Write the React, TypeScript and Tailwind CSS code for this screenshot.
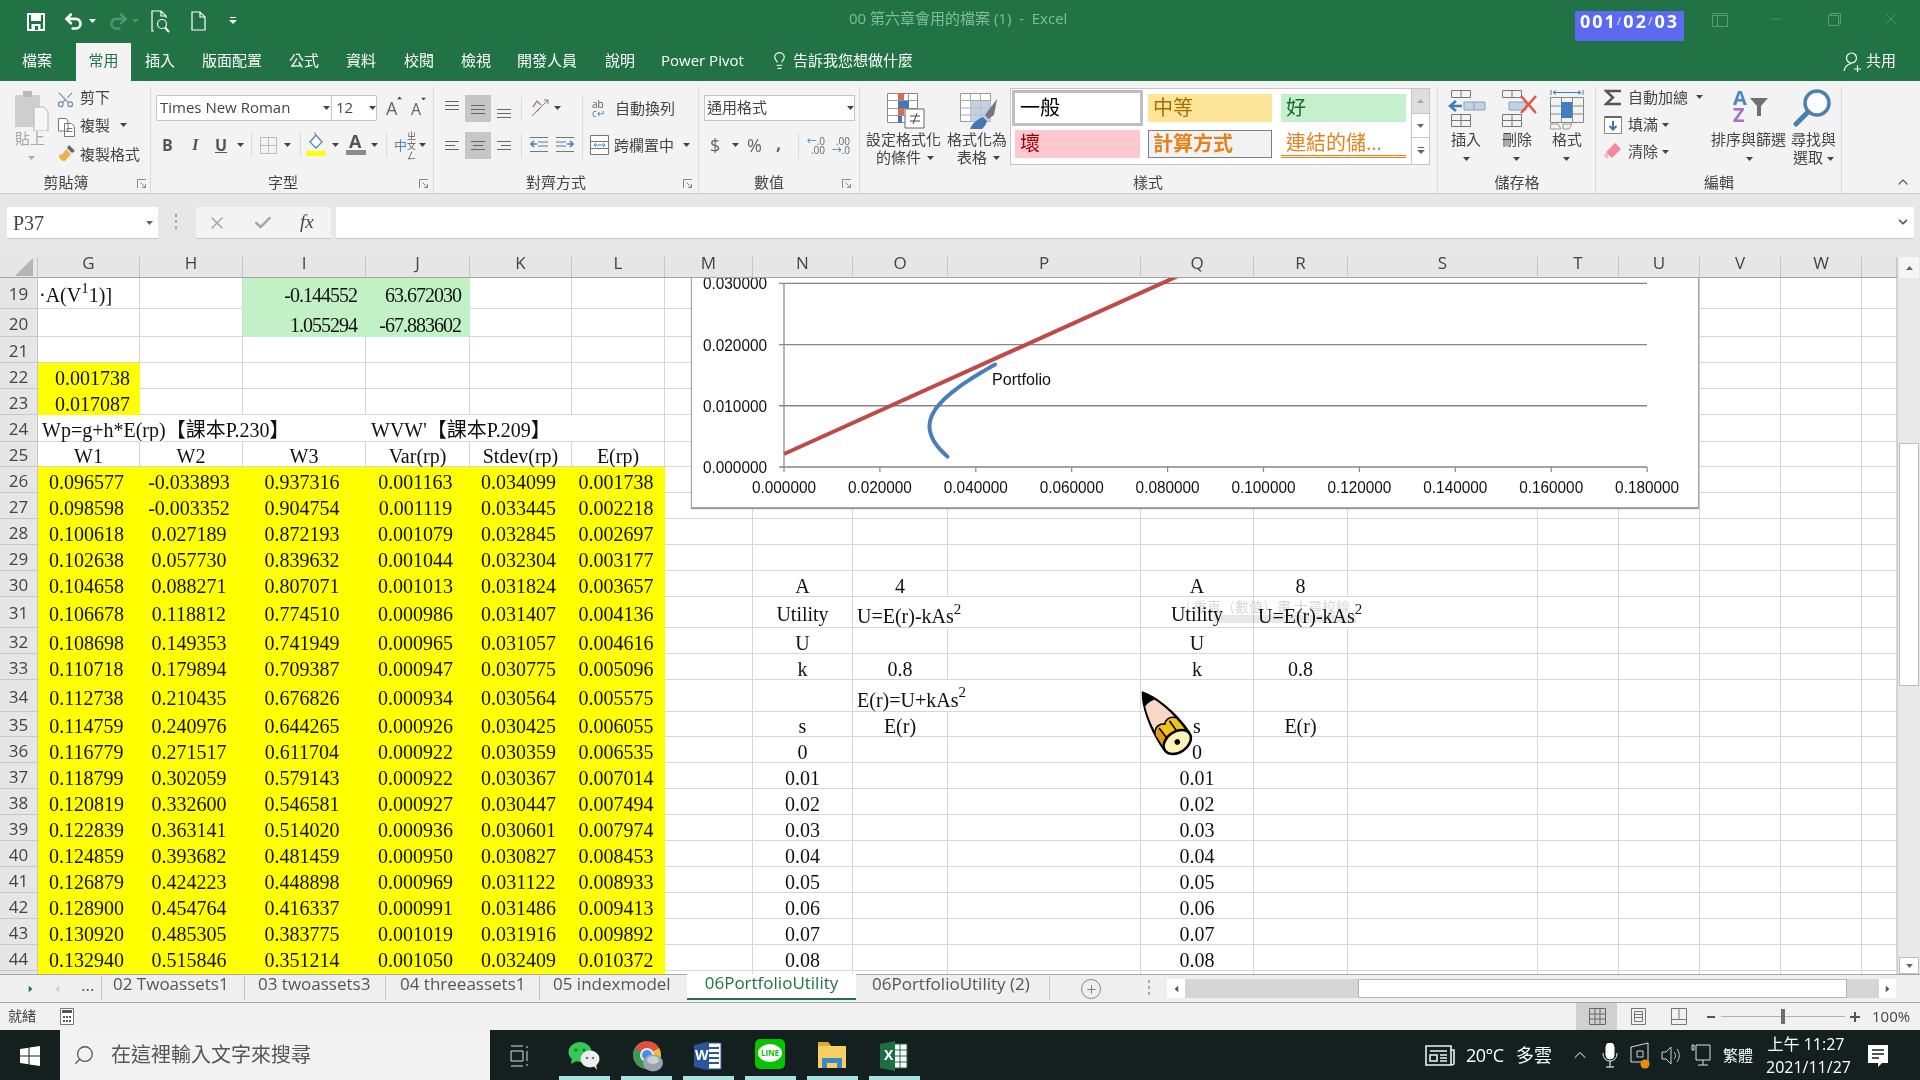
import React from "react";
import { Scissors, Undo2, Redo2, X, Check, Search, Lightbulb, Minus, ChevronUp, ChevronDown, Plus } from "lucide-react";

const Caret = ({ className = "" }: { className?: string }) => (
  <svg className={className} width="7" height="4" viewBox="0 0 7 4">
    <path d="M0 0h7L3.5 4z" fill="currentColor" />
  </svg>
);
const Launcher = ({ className = "" }: { className?: string }) => (
  <svg className={className} width="10" height="10" viewBox="0 0 10 10" fill="none" stroke="#8a8a8a">
    <path d="M.5 9V.5H9M3.5 3.5L8.5 8.5M5 8.5h3.5V5" />
  </svg>
);
const Lines = ({ className = "", y = 6, w = [14, 14, 14], align = "c" }: { className?: string; y?: number; w?: number[]; align?: string }) => (
  <svg className={className} width="18" height="18" viewBox="0 0 18 18" stroke="#666" strokeWidth="1">
    {w.map((v, i) => {
      const x = align === "l" ? 2 : align === "r" ? 16 - v : 9 - v / 2;
      return <path key={i} d={`M${x} ${y + i * 4 + 0.5}h${v}`} />;
    })}
  </svg>
);

const data: string[][] = [
  ["0.096577", "-0.033893", "0.937316", "0.001163", "0.034099", "0.001738"],
  ["0.098598", "-0.003352", "0.904754", "0.001119", "0.033445", "0.002218"],
  ["0.100618", "0.027189", "0.872193", "0.001079", "0.032845", "0.002697"],
  ["0.102638", "0.057730", "0.839632", "0.001044", "0.032304", "0.003177"],
  ["0.104658", "0.088271", "0.807071", "0.001013", "0.031824", "0.003657"],
  ["0.106678", "0.118812", "0.774510", "0.000986", "0.031407", "0.004136"],
  ["0.108698", "0.149353", "0.741949", "0.000965", "0.031057", "0.004616"],
  ["0.110718", "0.179894", "0.709387", "0.000947", "0.030775", "0.005096"],
  ["0.112738", "0.210435", "0.676826", "0.000934", "0.030564", "0.005575"],
  ["0.114759", "0.240976", "0.644265", "0.000926", "0.030425", "0.006055"],
  ["0.116779", "0.271517", "0.611704", "0.000922", "0.030359", "0.006535"],
  ["0.118799", "0.302059", "0.579143", "0.000922", "0.030367", "0.007014"],
  ["0.120819", "0.332600", "0.546581", "0.000927", "0.030447", "0.007494"],
  ["0.122839", "0.363141", "0.514020", "0.000936", "0.030601", "0.007974"],
  ["0.124859", "0.393682", "0.481459", "0.000950", "0.030827", "0.008453"],
  ["0.126879", "0.424223", "0.448898", "0.000969", "0.031122", "0.008933"],
  ["0.128900", "0.454764", "0.416337", "0.000991", "0.031486", "0.009413"],
  ["0.130920", "0.485305", "0.383775", "0.001019", "0.031916", "0.009892"],
  ["0.132940", "0.515846", "0.351214", "0.001050", "0.032409", "0.010372"],
];
const colNames = ["G", "H", "I", "J", "K", "L", "M", "N", "O", "P", "Q", "R", "S", "T", "U", "V", "W", ""];
const rowNums = Array.from({ length: 27 }, (_, i) => 19 + i);

const content: Record<string, React.ReactNode> = {
  G19: <>·A(V<sup>1</sup>1)]</>,
  I19: "-0.144552",
  J19: "63.672030",
  I20: "1.055294",
  J20: "-67.883602",
  G22: "0.001738",
  G23: "0.017087",
  G24: "Wp=g+h*E(rp)【課本P.230】",
  J24: "WVW'【課本P.209】",
  G25: "W1",
  H25: "W2",
  I25: "W3",
  J25: "Var(rp)",
  K25: "Stdev(rp)",
  L25: "E(rp)",
  N30: "A", O30: "4", Q30: "A", R30: "8",
  N31: "Utility", O31: <>U=E(r)-kAs<sup>2</sup></>, Q31: "Utility", R31: <>U=E(r)-kAs<sup>2</sup></>,
  N32: "U", Q32: "U",
  N33: "k", O33: "0.8", Q33: "k", R33: "0.8",
  O34: <>E(r)=U+kAs<sup>2</sup></>,
  N35: "s", O35: "E(r)", Q35: "s", R35: "E(r)",
};
["0", "0.01", "0.02", "0.03", "0.04", "0.05", "0.06", "0.07", "0.08"].forEach((v, i) => {
  content["N" + (36 + i)] = v;
  content["Q" + (36 + i)] = v;
});
data.forEach((r, i) => r.forEach((v, j) => (content["GHIJKL"[j] + (26 + i)] = v)));

function cellClass(col: string, row: number) {
  const key = col + row;
  let c = "flex items-center whitespace-nowrap min-w-0 border-r border-b ";
  const yellow = (row >= 26 && "GHIJKL".includes(col) && col !== "") || ((row === 22 || row === 23) && col === "G");
  const green = (row === 19 || row === 20) && (col === "I" || col === "J");
  if (yellow) c += "bg-[#ffff00] border-[#ffff00] ";
  else if (green) c += "bg-[#c1f1c5] border-[#c1f1c5] ";
  else c += "border-[#d6d6d6] ";
  if (["G24", "H24", "I24", "J24", "K24", "O31", "R31", "O34"].includes(key)) c += "border-r-transparent ";
  if (["G24"].includes(key)) c += "justify-start pl-[4px] pt-[4px] ";
  else if (key === "J24") c += "justify-start pl-[5px] pt-[4px] ";
  else if (key === "G19") c += "justify-start pl-[1px] pt-[4px] ";
  else if (key === "O31" || key === "O34" || key === "R31") c += "justify-start pl-[4px] pt-[8px] ";
  else if (green) c += "justify-end pr-[8px] tracking-[-1px] pt-[4px] ";
  else if (key === "G22" || key === "G23") c += "justify-end pr-[9px] pt-[4px] ";
  else if (yellow) c += "justify-center pr-[4px] pt-[4px] ";
  else c += "justify-center pt-[4px] ";
  return c;
}

const chartBlue = (() => {
  const pts: string[] = [];
  for (let i = 0; i <= 40; i++) {
    const e = 0.001738 + ((0.017087 - 0.001738) * i) / 40;
    const s = Math.sqrt(0.000921 + 9.56 * (e - 0.00677) * (e - 0.00677));
    pts.push(`${(784 + s * 4794).toFixed(1)},${(467 - e * 6000).toFixed(1)}`);
  }
  return pts.join(" ");
})();

const Chart = () => {
  const xs = [0, 1, 2, 3, 4, 5, 6, 7, 8, 9];
  const ys = [0, 1, 2, 3];
  return (
    <div className="absolute left-[691px] top-[-30px] w-[1008px] h-[260px] bg-white border border-[#a6a6a6] shadow-[0_1px_1px_#999]">
      <svg className="absolute left-[-1px] top-[-1px] [font-family:Liberation_Sans,sans-serif]" width="1008" height="260" viewBox="691 248 1008 260">
        {ys.map((i) => (
          <g key={i}>
            <path d={`M779 ${467 - i * 61.2}H1647`} stroke="#868686" strokeWidth="1.4" />
            <text x="767" y={467 - i * 61.2 + 6} textAnchor="end" fontSize="16" textLength="64" lengthAdjust="spacingAndGlyphs" fill="#111">
              {(i / 100).toFixed(6)}
            </text>
          </g>
        ))}
        <path d="M784 284V467" stroke="#868686" strokeWidth="1.2" />
        {xs.map((i) => (
          <g key={i}>
            <path d={`M${784 + i * 95.9} 467v5`} stroke="#868686" strokeWidth="1.2" />
            <text x={784 + i * 95.9} y="493" textAnchor="middle" fontSize="16" textLength="64" lengthAdjust="spacingAndGlyphs" fill="#111">
              {((i * 2) / 100).toFixed(6)}
            </text>
          </g>
        ))}
        <polyline points={chartBlue} fill="none" stroke="#4a7ebb" strokeWidth="4" strokeLinecap="round" />
        <path d="M784 454L1178 276" stroke="#be4b48" strokeWidth="4" />
        <text x="992" y="385" fontSize="16" textLength="59" lengthAdjust="spacingAndGlyphs" fill="#111">Portfolio</text>
      </svg>
    </div>
  );
};

const Pencil = () => (
  <svg className="absolute left-[1129px] top-[401px] z-20" width="76" height="100" viewBox="0 0 76 100">
    <g transform="translate(14 14) rotate(-35) scale(1.15)">
      <path d="M0 0C6 8 13 28 13 50A13 9 0 0 1 -13 50C-13 28 -6 8 0 0Z" fill="#f5c21b" stroke="#000" strokeWidth="2.2" />
      <path d="M-4.5 9C-8 18 -10 26 -10.5 34C-6 29 -2 31 0 33C2 31 6 29 10.5 34C10 26 8 18 4.5 9Z" fill="#f8d6c8" />
      <path d="M0 0C2.5 3 4 6 5 10C2 9 -2 9 -5 10C-4 6 -2.5 3 0 0Z" fill="#000" stroke="#000" />
      <path d="M-12 36C-12 40 -12 46 -13 50C-10 54 -8 55 -6 56L-6 32Z" fill="#e59a17" />
      <path d="M-6 33L-5 56M5 33L5 56M-11 34C-7 29 -2 31 0 33C2 31 7 29 11 34" fill="none" stroke="#000" strokeWidth="1.4" />
      <ellipse cx="0" cy="52" rx="13" ry="9" fill="#fbf3b8" stroke="#000" strokeWidth="2.2" />
      <circle cx="0" cy="52" r="2.4" fill="#000" />
    </g>
  </svg>
);

const Sheet = () => (
  <div className="relative w-[1920px] h-[717px] bg-white shrink-0 [font-family:Liberation_Serif,Noto_Sans_CJK_TC,serif] text-[20px] leading-[24px] text-[#111]">
    <div className="grid grid-cols-[38px_102px_103px_123px_104px_102px_93px_88px_100px_95px_193px_113px_94px_190px_81px_81px_81px_81px_35px] h-[21px] bg-[#e6e6e6] border-b border-[#a6a6a6] [font-family:Open_Sans,sans-serif] text-[17px] leading-[12px] text-[#444]">
      <div className="relative border-r border-[#c6c6c6]">
        <svg className="absolute left-[15px] top-[1px]" width="18" height="18" viewBox="0 0 18 18">
          <path d="M18 0V18H0Z" fill="#b4b4b4" />
        </svg>
      </div>
      {colNames.map((n, i) => (
        <div key={i} className="flex items-start justify-center border-r border-[#c6c6c6]">{n}</div>
      ))}
    </div>
    <div className="relative h-[696px] overflow-hidden">
      <div className="grid grid-cols-[38px_102px_103px_123px_104px_102px_93px_88px_100px_95px_193px_113px_94px_190px_81px_81px_81px_81px_35px] grid-rows-[31px_28px_26px_26px_26px_27px_25px_26px_26px_26px_26px_26px_31px_26px_26px_32px_25px_26px_26px_26px_26px_26px_26px_26px_26px_26px_26px]">
        {rowNums.map((r) => (
          <React.Fragment key={r}>
            <div className="flex items-center justify-center bg-[#e6e6e6] border-r border-b border-[#c6c6c6] pt-[2px] [font-family:Open_Sans,sans-serif] text-[17px] text-[#444]">{r}</div>
            {colNames.map((n, i) => (
              <div key={i} className={cellClass(n || "X", r)}>{content[n + r]}</div>
            ))}
          </React.Fragment>
        ))}
      </div>
      <Chart />
      <div className="absolute left-[1184px] top-[319px] w-[172px] h-[26px] overflow-hidden mix-blend-multiply [font-family:Noto_Sans_CJK_TC,sans-serif] text-[14px] leading-[18px] text-[#d8d8d8] whitespace-nowrap">
        <div className="pl-[2px]">| 重直（數值）畫 士尋校線</div>
        <div className="absolute left-[29px] top-[18px] w-[143px] h-[8px] bg-[#e8e8e8]" />
      </div>
      <Pencil />
    </div>
    {/* vertical scrollbar */}
    <div className="absolute right-0 top-0 w-[23px] h-[717px] bg-[#e9e9e9] border-l border-[#d0d0d0]">
      <div className="absolute left-[1px] top-[0px] w-[20px] h-[21px] bg-[#f5f5f5] flex items-center justify-center text-[#666]">
        <Caret className="rotate-180" />
      </div>
      <div className="absolute left-[1px] top-[186px] w-[20px] h-[243px] bg-white border border-[#bdbdbd]" />
      <div className="absolute left-[1px] top-[700px] w-[20px] h-[17px] bg-white border border-[#bdbdbd] flex items-center justify-center text-[#666]">
        <Caret />
      </div>
    </div>
  </div>
);

const TitleBar = () => (
  <div className="relative h-[81px] bg-[#217346] shrink-0 text-white">
    <svg className="absolute left-[27px] top-[13px]" width="18" height="18" viewBox="0 0 18 18">
      <path d="M1 1H17V17H1Z" fill="none" stroke="#fff" strokeWidth="2" />
      <path d="M4 2H14V8H4ZM4.5 11H13.5V17H4.5Z" fill="#fff" />
      <path d="M8 13H11V17H8Z" fill="#217346" />
    </svg>
    <Undo2 className="absolute left-[63px] top-[11px]" size={21} strokeWidth={3} />
    <Caret className="absolute left-[89px] top-[19px] text-white" />
    <Redo2 className="absolute left-[108px] top-[11px] text-[#4e9470]" size={21} strokeWidth={3} />
    <Caret className="absolute left-[132px] top-[19px] text-[#4e9470]" />
    <svg className="absolute left-[151px] top-[10px]" width="20" height="23" viewBox="0 0 20 23" fill="none" stroke="#fff" strokeWidth="1.2">
      <path d="M3 21H1V1H10L15 6V8M10 1V6H15" />
      <circle cx="11" cy="14" r="4.5" />
      <path d="M14 17.5L18 22" strokeWidth="2" />
    </svg>
    <svg className="absolute left-[191px] top-[11px]" width="15" height="20" viewBox="0 0 15 20" fill="none" stroke="#fff" strokeWidth="1.2">
      <path d="M1 1H9L14 6V19H1ZM9 1V6H14" />
    </svg>
    <svg className="absolute left-[229px] top-[17px]" width="8" height="8" viewBox="0 0 8 8" fill="#fff">
      <path d="M1 0H7V1H1ZM0 3H8L4 7Z" />
    </svg>
    <div className="absolute left-[849px] top-[8px] text-[15px] leading-[20px] text-[#83bc9c] whitespace-pre">00 第六章會用的檔案 (1)  -  Excel</div>
    <div className="absolute left-[1575px] top-[11px] w-[109px] h-[30px] bg-[#5b6af0] flex items-center justify-center pb-[10px] font-bold text-[18px] tracking-[2px] text-white">
      001<span className="text-[11px] opacity-60">/</span>02<span className="text-[11px] opacity-60">/</span>03
    </div>
    <svg className="absolute left-[1712px] top-[13px]" width="16" height="14" viewBox="0 0 16 14" fill="none" stroke="#5c9a7a">
      <path d="M.5 2.5H15.5V13.5H.5ZM.5 .5H15.5M5.5 2.5V13.5" />
    </svg>
    <Minus className="absolute left-[1768px] top-[11px] text-[#5c9a7a]" size={16} strokeWidth={1} />
    <svg className="absolute left-[1828px] top-[13px]" width="13" height="13" viewBox="0 0 13 13" fill="none" stroke="#5c9a7a">
      <path d="M.5 2.5H10.5V12.5H.5ZM2.5 2.5V.5H12.5V10.5H10.5" />
    </svg>
    <X className="absolute left-[1882px] top-[10px] text-[#5c9a7a]" size={18} strokeWidth={1} />
    {/* tabs */}
    <div className="absolute left-0 top-[43px] w-full h-[38px] text-[15px] leading-[35px] whitespace-nowrap">
      <span className="absolute left-[22px]">檔案</span>
      <div className="absolute left-[76px] top-0 w-[55px] h-[38px] bg-[#f3f3f3] text-[#217346] text-center">常用</div>
      <span className="absolute left-[145px]">插入</span>
      <span className="absolute left-[202px]">版面配置</span>
      <span className="absolute left-[289px]">公式</span>
      <span className="absolute left-[346px]">資料</span>
      <span className="absolute left-[404px]">校閱</span>
      <span className="absolute left-[461px]">檢視</span>
      <span className="absolute left-[517px]">開發人員</span>
      <span className="absolute left-[605px]">說明</span>
      <span className="absolute left-[661px]">Power Pivot</span>
      <Lightbulb className="absolute left-[770px] top-[8px]" size={19} strokeWidth={1.4} />
      <span className="absolute left-[793px]">告訴我您想做什麼</span>
      <svg className="absolute left-[1843px] top-[9px]" width="19" height="20" viewBox="0 0 19 20" fill="none" stroke="#fff" strokeWidth="1.2">
        <circle cx="8.5" cy="6" r="5" />
        <path d="M1 19C2 14 5 12 8.5 11.5M11 17H18M14.5 13.5V20" />
      </svg>
      <span className="absolute left-[1866px]">共用</span>
    </div>
  </div>
);

const GroupLabel = ({ w, text }: { w: string; text: string }) => (
  <div className={`absolute left-0 top-[85px] text-center text-[15px] leading-[20px] ${w}`}>{text}</div>
);

const Ribbon = () => (
  <div className="relative flex h-[113px] bg-[#f3f3f3] border-b border-[#c9c9c9] shrink-0 text-[15px] leading-[20px] text-[#444] whitespace-nowrap">
    {/* Clipboard */}
    <div className="relative w-[151px] h-[106px] mt-[6px] border-r border-[#dadada] shrink-0">
      <svg className="absolute left-[14px] top-[2px]" width="36" height="42" viewBox="0 0 36 42">
        <path d="M1 6H26V38H1Z" fill="#cfcfcf" />
        <path d="M9 2H18V8H9Z" fill="#b8b8b8" />
        <path d="M20 18H30L34 22V42H20Z" fill="#f6f6f6" stroke="#b5b5b5" />
      </svg>
      <span className="absolute left-[15px] top-[41px] text-[#a8a8a8]">貼上</span>
      <Caret className="absolute left-[28px] top-[69px] text-[#aaa]" />
      <Scissors className="absolute left-[56px] top-[3px] text-[#7189a8] -rotate-90" size={19} strokeWidth={1.4} />
      <span className="absolute left-[80px] top-[0px]">剪下</span>
      <svg className="absolute left-[58px] top-[31px]" width="17" height="19" viewBox="0 0 17 19" fill="#fff" stroke="#777">
        <path d="M.5 .5H8L10 3V13H.5ZM6.5 5.5H13.5L16.5 8.5V18.5H6.5ZM8.5 10.5H14.5M8.5 13.5H14.5" />
      </svg>
      <span className="absolute left-[80px] top-[28px]">複製</span>
      <Caret className="absolute left-[120px] top-[36px]" />
      <svg className="absolute left-[58px] top-[57px]" width="18" height="18" viewBox="0 0 18 18">
        <path d="M11 1L17 7L14 9L9 4Z" fill="#666" />
        <path d="M8 5L13 10L7 17C4 17 1 15 1 11C5 11 6 8 8 5Z" fill="#e6b54a" />
      </svg>
      <span className="absolute left-[80px] top-[57px]">複製格式</span>
      <GroupLabel w="w-[132px]" text="剪貼簿" />
      <Launcher className="absolute left-[137px] top-[92px]" />
    </div>
    {/* Font */}
    <div className="relative w-[283px] h-[106px] mt-[6px] border-r border-[#dadada] shrink-0">
      <div className="absolute left-[5px] top-[8px] w-[221px] h-[26px] bg-white border border-[#c6c6c6] rounded-[2px]">
        <span className="absolute left-[3px] top-[1px]">Times New Roman</span>
        <Caret className="absolute left-[166px] top-[10px]" />
        <div className="absolute left-[174px] top-0 h-[24px] border-l border-[#c6c6c6]" />
        <span className="absolute left-[179px] top-[1px]">12</span>
        <Caret className="absolute left-[212px] top-[10px]" />
      </div>
      <span className="absolute left-[235px] top-[9px] text-[18px] leading-[24px] text-[#666]">A</span>
      <Caret className="absolute left-[245px] top-[9px] rotate-180 scale-75" />
      <span className="absolute left-[260px] top-[11px] text-[16px] leading-[22px] text-[#666]">A</span>
      <Caret className="absolute left-[269px] top-[10px] scale-75" />
      <span className="absolute left-[11px] top-[47px] font-bold text-[16px] leading-[22px] text-[#555]">B</span>
      <span className="absolute left-[41px] top-[47px] [font-family:Liberation_Serif,serif] font-bold italic text-[17px] leading-[22px] text-[#555]">I</span>
      <span className="absolute left-[64px] top-[47px] font-bold text-[16px] leading-[22px] underline text-[#555]">U</span>
      <Caret className="absolute left-[86px] top-[56px]" />
      <div className="absolute left-[100px] top-[46px] h-[24px] border-l border-[#d9d9d9]" />
      <svg className="absolute left-[109px] top-[50px]" width="17" height="17" viewBox="0 0 17 17" fill="none" stroke="#888" strokeDasharray="1 1">
        <path d="M.5 .5H16.5V16.5H.5ZM8.5 .5V16.5M.5 8.5H16.5" />
      </svg>
      <Caret className="absolute left-[133px] top-[56px]" />
      <div className="absolute left-[149px] top-[46px] h-[24px] border-l border-[#d9d9d9]" />
      <svg className="absolute left-[155px] top-[44px]" width="20" height="25" viewBox="0 0 20 25">
        <path d="M4 11L10 4L16 11L10 17Z" fill="#fff" stroke="#5b87b5" strokeWidth="1.3" />
        <path d="M9 4V1" stroke="#888" />
        <path d="M0 20H20V25H0Z" fill="#ffff00" />
      </svg>
      <Caret className="absolute left-[181px] top-[56px]" />
      <span className="absolute left-[198px] top-[43px] font-bold text-[18px] leading-[22px] text-[#555]">A</span>
      <div className="absolute left-[195px] top-[63px] w-[20px] h-[5px] bg-[#8c8c8c]" />
      <Caret className="absolute left-[220px] top-[56px]" />
      <div className="absolute left-[235px] top-[46px] h-[24px] border-l border-[#d9d9d9]" />
      <span className="absolute left-[243px] top-[48px] text-[13px] text-[#4c86bf]">中</span>
      <span className="absolute left-[256px] top-[44px] text-[9px] leading-[10px] w-[7px] whitespace-normal text-[#555]">ㄓ文ㄥ</span>
      <Caret className="absolute left-[268px] top-[56px]" />
      <GroupLabel w="w-[264px]" text="字型" />
      <Launcher className="absolute left-[268px] top-[92px]" />
    </div>
    {/* Alignment */}
    <div className="relative w-[265px] h-[106px] mt-[6px] border-r border-[#dadada] shrink-0">
      <div className="absolute left-[31px] top-[8px] w-[26px] h-[27px] bg-[#c6c6c6]" />
      <div className="absolute left-[31px] top-[45px] w-[26px] h-[27px] bg-[#c6c6c6]" />
      <Lines className="absolute left-[9px] top-[11px]" y={3} />
      <Lines className="absolute left-[35px] top-[13px]" y={5} />
      <Lines className="absolute left-[61px] top-[15px]" y={7} />
      <div className="absolute left-[87px] top-[10px] h-[24px] border-l border-[#d9d9d9]" />
      <svg className="absolute left-[96px] top-[11px]" width="20" height="20" viewBox="0 0 20 20" fill="none" stroke="#777">
        <path d="M2 18L18 2M14 2H18V6" stroke="#777" />
        <path d="M3 9L7 3L11 7M6 14L10 10" stroke="#a080a0" strokeWidth="1.4" />
      </svg>
      <Caret className="absolute left-[120px] top-[19px]" />
      <Lines className="absolute left-[9px] top-[49px]" y={5} w={[14, 10, 14]} align="l" />
      <Lines className="absolute left-[35px] top-[49px]" y={5} w={[14, 10, 14]} />
      <Lines className="absolute left-[61px] top-[49px]" y={5} w={[14, 10, 14]} align="r" />
      <div className="absolute left-[87px] top-[47px] h-[24px] border-l border-[#d9d9d9]" />
      <svg className="absolute left-[96px] top-[49px]" width="18" height="18" viewBox="0 0 18 18" fill="none">
        <path d="M0 1.5H18M8 6H18M8 10H18M0 15.5H18" stroke="#777" />
        <path d="M7 8H1M4 5L1 8L4 11" stroke="#3f86c8" strokeWidth="1.6" />
      </svg>
      <svg className="absolute left-[122px] top-[49px]" width="18" height="18" viewBox="0 0 18 18" fill="none">
        <path d="M0 1.5H18M0 6H10M0 10H10M0 15.5H18" stroke="#777" />
        <path d="M11 8H17M14 5L17 8L14 11" stroke="#3f86c8" strokeWidth="1.6" />
      </svg>
      <div className="absolute left-[148px] top-[8px] h-[64px] border-l border-[#dadada]" />
      <div className="absolute left-[158px] top-[13px] text-[10px] leading-[9px] text-[#555]">ab<br /><span className="text-[#3f7fbf]">c↵</span></div>
      <span className="absolute left-[181px] top-[11px]">自動換列</span>
      <svg className="absolute left-[156px] top-[48px]" width="19" height="20" viewBox="0 0 19 20" fill="#fff" stroke="#777">
        <path d="M.5 .5H18.5V19.5H.5ZM.5 6.5H18.5M.5 13.5H18.5" />
        <path d="M4 10H15M6 8L4 10L6 12M13 8L15 10L13 12" stroke="#3f86c8" fill="none" />
      </svg>
      <span className="absolute left-[180px] top-[48px]">跨欄置中</span>
      <Caret className="absolute left-[249px] top-[56px]" />
      <GroupLabel w="w-[244px]" text="對齊方式" />
      <Launcher className="absolute left-[249px] top-[92px]" />
    </div>
    {/* Number */}
    <div className="relative w-[161px] h-[106px] mt-[6px] border-r border-[#dadada] shrink-0">
      <div className="absolute left-[5px] top-[8px] w-[151px] h-[26px] bg-white border border-[#c6c6c6]">
        <span className="absolute left-[2px] top-[1px]">通用格式</span>
        <Caret className="absolute left-[142px] top-[10px]" />
      </div>
      <span className="absolute left-[11px] top-[46px] text-[18px] leading-[24px] text-[#666]">$</span>
      <Caret className="absolute left-[33px] top-[56px]" />
      <span className="absolute left-[48px] top-[46px] text-[18px] leading-[24px] text-[#666]">%</span>
      <span className="absolute left-[77px] top-[44px] font-bold text-[18px] leading-[24px] text-[#666]">,</span>
      <div className="absolute left-[99px] top-[46px] h-[26px] border-l border-[#d9d9d9]" />
      <div className="absolute left-[106px] top-[50px] w-[20px] text-[10px] leading-[9px] text-right text-[#666]"><span className="text-[#3f86c8]">←</span>.0<br />.00</div>
      <div className="absolute left-[131px] top-[50px] w-[20px] text-[10px] leading-[9px] text-right text-[#666]">.00<br /><span className="text-[#3f86c8]">→</span>.0</div>
      <GroupLabel w="w-[140px]" text="數值" />
      <Launcher className="absolute left-[143px] top-[92px]" />
    </div>
    {/* Styles */}
    <div className="relative w-[578px] h-[106px] mt-[6px] border-r border-[#dadada] shrink-0">
      <svg className="absolute left-[27px] top-[6px]" width="38" height="36" viewBox="0 0 38 36">
        <path d="M.5 .5H30.5V29.5H.5Z" fill="#fff" stroke="#888" />
        <path d="M.5 7.5H30.5M.5 15.5H30.5M.5 22.5H30.5M11.5 .5V29.5M21.5 .5V29.5" stroke="#999" />
        <path d="M11 0H17V7H11ZM11 15H17V22H11Z" fill="#d9684f" />
        <path d="M11 8H22V15H11ZM11 23H15V30H11Z" fill="#4279b5" />
        <path d="M18 16H37V35H18Z" fill="#fff" stroke="#666" />
        <path d="M23 23H33M23 28H33M30 20L26 31" stroke="#444" />
      </svg>
      <span className="absolute left-[6px] top-[42px]">設定格式化</span>
      <span className="absolute left-[16px] top-[60px]">的條件</span>
      <Caret className="absolute left-[67px] top-[69px]" />
      <svg className="absolute left-[100px] top-[6px]" width="38" height="36" viewBox="0 0 38 36">
        <path d="M.5 .5H30.5V28.5H.5Z" fill="#fff" stroke="#999" />
        <path d="M.5 7.5H30.5M.5 15H30.5M.5 22H30.5M10.5 .5V28.5M20.5 .5V28.5" stroke="#aaa" />
        <path d="M10 8H31V29H10Z" fill="#b3c6dc" opacity=".8" />
        <path d="M25 22L37 6L34 22L28 26Z" fill="#777" />
        <path d="M10 36C12 30 18 26 23 24L27 28C26 32 24 34 22 36Z" fill="#4279b5" />
      </svg>
      <span className="absolute left-[87px] top-[42px]">格式化為</span>
      <span className="absolute left-[97px] top-[60px]">表格</span>
      <Caret className="absolute left-[133px] top-[69px]" />
      <div className="absolute left-[150px] top-[1px] w-[420px] h-[77px] bg-white border border-[#c6c6c6]" />
      <div className="absolute left-[152px] top-[3px] w-[131px] h-[36px] border-[3px] border-[#bfbfbf]" />
      <div className="absolute left-[155px] top-[6px] w-[125px] h-[29px] bg-white pl-[5px] text-[20px] leading-[29px] text-black">一般</div>
      <div className="absolute left-[288px] top-[7px] w-[124px] h-[28px] bg-[#fde69a] pl-[5px] text-[20px] leading-[28px] text-[#a96a00]">中等</div>
      <div className="absolute left-[421px] top-[7px] w-[125px] h-[28px] bg-[#c6efce] pl-[5px] text-[20px] leading-[28px] text-[#1d6a2a]">好</div>
      <div className="absolute left-[155px] top-[43px] w-[125px] h-[28px] bg-[#ffc7ce] pl-[5px] text-[20px] leading-[28px] text-[#9c0006]">壞</div>
      <div className="absolute left-[288px] top-[43px] w-[124px] h-[28px] bg-[#f2f2f2] border border-[#7f7f7f] pl-[4px] text-[20px] leading-[26px] font-bold text-[#e8801a]">計算方式</div>
      <div className="absolute left-[421px] top-[43px] w-[125px] h-[28px] pl-[5px] text-[20px] leading-[26px] text-[#e8801a] border-b-[3px] border-double border-[#e8801a]">連結的儲...</div>
      <div className="absolute left-[551px] top-[1px] w-[19px] h-[26px] bg-[#dedede] border border-[#c6c6c6] flex items-center justify-center text-[#aaa]"><Caret className="rotate-180" /></div>
      <div className="absolute left-[551px] top-[26px] w-[19px] h-[25px] bg-white border border-[#c6c6c6] flex items-center justify-center text-[#666]"><Caret /></div>
      <div className="absolute left-[551px] top-[50px] w-[19px] h-[28px] bg-white border border-[#c6c6c6] flex items-center justify-center text-[#666]">
        <svg width="8" height="8" viewBox="0 0 8 8" fill="currentColor"><path d="M1 0H7V1H1ZM0 3H8L4 7Z" /></svg>
      </div>
      <GroupLabel w="w-[576px]" text="樣式" />
    </div>
    {/* Cells */}
    <div className="relative w-[158px] h-[106px] mt-[6px] border-r border-[#dadada] shrink-0">
      <svg className="absolute left-[10px] top-[3px]" width="38" height="38" viewBox="0 0 38 38" fill="none">
        <path d="M3.5 .5H22.5V7.5H3.5ZM13 .5V7.5M3.5 24.5H22.5V36.5H3.5ZM13 24.5V36.5M3.5 30.5H22.5" stroke="#777" />
        <path d="M16 12H37V20H16Z" fill="#c3d2e3" stroke="#8aa3c0" />
        <path d="M26 12V20" stroke="#8aa3c0" />
        <path d="M14 16H3M8 11L2 16L8 21" stroke="#3f7fbf" strokeWidth="2.6" />
      </svg>
      <span className="absolute left-[13px] top-[42px]">插入</span>
      <Caret className="absolute left-[25px] top-[70px]" />
      <svg className="absolute left-[64px] top-[3px]" width="36" height="38" viewBox="0 0 36 38" fill="none">
        <path d="M.5 .5H19.5V7.5H.5ZM10 .5V7.5M.5 24.5H19.5V36.5H.5ZM10 24.5V36.5M.5 30.5H19.5" stroke="#777" />
        <path d="M7 12H24V20H7Z" fill="#c3d2e3" stroke="#8aa3c0" />
        <path d="M19 6L34 23M34 6L19 23" stroke="#e2563e" strokeWidth="2.4" />
      </svg>
      <span className="absolute left-[64px] top-[42px]">刪除</span>
      <Caret className="absolute left-[75px] top-[70px]" />
      <svg className="absolute left-[111px] top-[1px]" width="36" height="42" viewBox="0 0 36 42" fill="none">
        <path d="M2 2V7M34 2V7M4 4.5H32M4 4.5L7 2.5M4 4.5L7 6.5M32 4.5L29 2.5M32 4.5L29 6.5" stroke="#3f7fbf" />
        <path d="M1.5 9.5H34.5V34.5H1.5ZM1.5 18H34.5M1.5 26H34.5M12.5 9.5V34.5M23.5 9.5V34.5" stroke="#888" />
        <path d="M12 14H23V30H12Z" fill="#3f7fbf" />
        <path d="M1.5 36H9L12 41H1.5ZM14 36H23L20 41H14Z" stroke="#999" />
      </svg>
      <span className="absolute left-[114px] top-[42px]">格式</span>
      <Caret className="absolute left-[125px] top-[70px]" />
      <GroupLabel w="w-[158px]" text="儲存格" />
    </div>
    {/* Editing */}
    <div className="relative w-[246px] h-[106px] mt-[6px] border-r border-[#dadada] shrink-0">
      <svg className="absolute left-[8px] top-[2px]" width="18" height="17" viewBox="0 0 18 17" fill="none" stroke="#555" strokeWidth="2.4">
        <path d="M17 2H2L9 8.5L2 15H17" />
      </svg>
      <span className="absolute left-[32px] top-[0px]">自動加總</span>
      <Caret className="absolute left-[100px] top-[8px]" />
      <svg className="absolute left-[8px] top-[29px]" width="18" height="18" viewBox="0 0 18 18" fill="none">
        <path d="M.5 .5H17.5V17.5H.5Z" fill="#fff" stroke="#888" />
        <path d="M1 1H17" stroke="#666" strokeWidth="2" />
        <path d="M9 5V13M5.5 10L9 13.5L12.5 10" stroke="#3d74ad" strokeWidth="2" />
      </svg>
      <span className="absolute left-[32px] top-[27px]">填滿</span>
      <Caret className="absolute left-[66px] top-[36px]" />
      <svg className="absolute left-[8px] top-[55px]" width="18" height="18" viewBox="0 0 18 18">
        <path d="M11 1L17 7L8 16L2 10Z" fill="#ef8aa0" />
        <path d="M2 10L5 13L3 17L0 14Z" fill="#f2b8c4" />
      </svg>
      <span className="absolute left-[32px] top-[54px]">清除</span>
      <Caret className="absolute left-[66px] top-[63px]" />
      <span className="absolute left-[137px] top-[1px] font-bold text-[20px] leading-[20px] text-[#4a86c5]">A</span>
      <span className="absolute left-[137px] top-[18px] font-bold text-[20px] leading-[20px] text-[#a573c6]">Z</span>
      <svg className="absolute left-[153px] top-[10px]" width="20" height="20" viewBox="0 0 20 20">
        <path d="M1 1H19L12 9V19H8V9Z" fill="#707070" />
      </svg>
      <span className="absolute left-[115px] top-[42px]">排序與篩選</span>
      <Caret className="absolute left-[150px] top-[70px]" />
      <svg className="absolute left-[197px] top-[2px]" width="40" height="38" viewBox="0 0 40 38" fill="none">
        <circle cx="24" cy="14" r="12" fill="#fff" stroke="#4c80b0" strokeWidth="3.5" />
        <path d="M15 23L3 35" stroke="#4c80b0" strokeWidth="5" strokeLinecap="round" />
      </svg>
      <span className="absolute left-[195px] top-[42px]">尋找與</span>
      <span className="absolute left-[197px] top-[60px]">選取</span>
      <Caret className="absolute left-[231px] top-[70px]" />
      <GroupLabel w="w-[246px]" text="編輯" />
    </div>
    <ChevronUp className="absolute left-[1895px] top-[93px] text-[#666]" size={16} strokeWidth={2} />
  </div>
);

const FormulaBar = () => (
  <div className="relative h-[63px] bg-[#e7e7e7] shrink-0 text-[#444]">
    <div className="absolute left-[7px] top-[13px] w-[151px] h-[32px] bg-white border-b border-[#c6c6c6]">
      <span className="absolute left-[6px] top-[4px] [font-family:Liberation_Serif,serif] text-[20px] leading-[24px]">P37</span>
      <Caret className="absolute left-[139px] top-[14px] text-[#666]" />
    </div>
    <div className="absolute left-[175px] top-[20px] flex flex-col gap-[3px]">
      <div className="w-[2px] h-[3px] bg-[#aaa]" />
      <div className="w-[2px] h-[3px] bg-[#aaa]" />
      <div className="w-[2px] h-[3px] bg-[#aaa]" />
    </div>
    <div className="absolute left-[196px] top-[13px] w-[135px] h-[32px] bg-[#f3f3f3] border-b border-[#c6c6c6]">
      <X className="absolute left-[11px] top-[6px] text-[#a8a8a8]" size={20} strokeWidth={2} />
      <Check className="absolute left-[57px] top-[6px] text-[#a8a8a8]" size={20} strokeWidth={3} />
      <span className="absolute left-[104px] top-[3px] [font-family:Liberation_Serif,serif] italic text-[19px] leading-[24px]">fx</span>
    </div>
    <div className="absolute left-[336px] top-[13px] w-[1578px] h-[32px] bg-white border-b border-[#c6c6c6]">
      <ChevronDown className="absolute left-[1560px] top-[8px] text-[#555]" size={14} strokeWidth={3} />
    </div>
  </div>
);

const SheetTabs = () => (
  <div className="relative h-[29px] bg-[#efefef] border-t border-[#a6a6a6] border-b shrink-0 text-[17px] leading-[20px] text-[#555] whitespace-nowrap">
    <Caret className="absolute left-[27px] top-[12px] -rotate-90 text-[#217346]" />
    <Caret className="absolute left-[54px] top-[12px] rotate-90 text-[#ccc]" />
    <span className="absolute left-[81px] top-[0px]">...</span>
    <div className="absolute left-[101px] top-[1px] h-[24px] border-l border-[#c6c6c6]" />
    <span className="absolute left-[113px] top-[-1px]">02 Twoassets1</span>
    <div className="absolute left-[244px] top-[1px] h-[24px] border-l border-[#c6c6c6]" />
    <span className="absolute left-[258px] top-[-1px]">03 twoassets3</span>
    <div className="absolute left-[385px] top-[1px] h-[24px] border-l border-[#c6c6c6]" />
    <span className="absolute left-[400px] top-[-1px]">04 threeassets1</span>
    <div className="absolute left-[539px] top-[1px] h-[24px] border-l border-[#c6c6c6]" />
    <span className="absolute left-[553px] top-[-1px]">05 indexmodel</span>
    <div className="absolute left-[687px] top-[-1px] w-[169px] h-[26px] bg-white border-b-[2px] border-[#217346] text-center text-[#217346] leading-[18px]">06PortfolioUtility</div>
    <span className="absolute left-[872px] top-[-1px]">06PortfolioUtility (2)</span>
    <div className="absolute left-[1049px] top-[1px] h-[24px] border-l border-[#c6c6c6]" />
    <div className="absolute left-[1081px] top-[4px] w-[20px] h-[20px] rounded-full border border-[#888] flex items-center justify-center">
      <Plus size={13} strokeWidth={1.5} className="text-[#666]" />
    </div>
    <div className="absolute left-[1148px] top-[5px] flex flex-col gap-[3px]">
      <div className="w-[2px] h-[3px] bg-[#aaa]" />
      <div className="w-[2px] h-[3px] bg-[#aaa]" />
      <div className="w-[2px] h-[3px] bg-[#aaa]" />
    </div>
    <div className="absolute left-[1167px] top-[4px] w-[729px] h-[19px] bg-[#d6d6d6]" />
    <div className="absolute left-[1167px] top-[4px] w-[18px] h-[19px] bg-white flex items-center justify-center text-[#555]"><Caret className="rotate-90" /></div>
    <div className="absolute left-[1358px] top-[4px] w-[489px] h-[19px] bg-white border border-[#b5b5b5]" />
    <div className="absolute left-[1879px] top-[4px] w-[17px] h-[19px] bg-white flex items-center justify-center text-[#555]"><Caret className="-rotate-90" /></div>
  </div>
);

const StatusBar = () => (
  <div className="relative h-[27px] bg-[#f1f1f1] shrink-0 text-[14px] leading-[26px] text-[#444]">
    <span className="absolute left-[8px] top-0">就緒</span>
    <svg className="absolute left-[60px] top-[5px]" width="14" height="17" viewBox="0 0 14 17">
      <path d="M.5 .5H13.5V16.5H.5Z" fill="#fff" stroke="#777" />
      <path d="M2 2H12V5H2ZM3 8H5V10H3ZM6 8H8V10H6ZM9 8H11V10H9ZM3 12H5V14H3ZM6 12H8V14H6ZM9 12H11V14H9Z" fill="#555" />
    </svg>
    <div className="absolute left-[1576px] top-0 w-[41px] h-[27px] bg-[#d0d0d0]" />
    <svg className="absolute left-[1589px] top-[5px]" width="17" height="17" viewBox="0 0 17 17" fill="none" stroke="#666">
      <path d="M.5 .5H16.5V16.5H.5ZM.5 6H16.5M.5 11H16.5M6 .5V16.5M11 .5V16.5" />
    </svg>
    <svg className="absolute left-[1631px] top-[5px]" width="15" height="17" viewBox="0 0 15 17" fill="none" stroke="#777">
      <path d="M.5 .5H14.5V16.5H.5ZM3.5 3.5H11.5V13.5H3.5ZM3.5 6.5H11.5M3.5 9.5H11.5" />
    </svg>
    <svg className="absolute left-[1671px] top-[5px]" width="16" height="17" viewBox="0 0 16 17" fill="none" stroke="#777">
      <path d="M.5 .5H15.5V16.5H.5ZM.5 11.5H15.5M8 .5V11.5" />
    </svg>
    <div className="absolute left-[1707px] top-[13px] w-[8px] h-[2px] bg-[#555]" />
    <div className="absolute left-[1721px] top-[13px] w-[124px] h-[1px] bg-[#b0b0b0]" />
    <div className="absolute left-[1781px] top-[6px] w-[4px] h-[15px] bg-[#6e6e6e]" />
    <div className="absolute left-[1850px] top-[13px] w-[10px] h-[2px] bg-[#555]" />
    <div className="absolute left-[1854px] top-[9px] w-[2px] h-[10px] bg-[#555]" />
    <span className="absolute left-[1872px] top-0 text-[15px]">100%</span>
  </div>
);

const Taskbar = () => (
  <div className="relative h-[50px] bg-[#13201f] shrink-0 text-white whitespace-nowrap">
    <svg className="absolute left-[20px] top-[16px]" width="20" height="20" viewBox="0 0 20 20" fill="#fff">
      <path d="M0 3L8.5 1.8V9.5H0ZM9.5 1.6L20 0V9.5H9.5ZM0 10.5H8.5V18.2L0 17ZM9.5 10.5H20V20L9.5 18.4Z" />
    </svg>
    <div className="absolute left-[60px] top-0 w-[430px] h-[50px] bg-[#f2f2f2] text-[20px] leading-[50px] text-[#555]">
      <Search className="absolute left-[13px] top-[14px] -scale-x-100" size={22} strokeWidth={1.4} />
      <span className="absolute left-[51px] top-0">在這裡輸入文字來搜尋</span>
    </div>
    <svg className="absolute left-[510px] top-[15px]" width="20" height="22" viewBox="0 0 20 22" fill="none" stroke="#ddd">
      <path d="M1 1H13M1 21H13M1 6H13V16H1ZM17 6V16" />
      <path d="M17 1V3M17 19V21" />
    </svg>
    <svg className="absolute left-[568px] top-[11px]" width="32" height="30" viewBox="0 0 32 30">
      <ellipse cx="12" cy="11" rx="11.5" ry="10" fill="#35c95c" />
      <path d="M4 17L3 23L10 19Z" fill="#35c95c" />
      <circle cx="8" cy="9" r="1.6" fill="#0f7a33" />
      <circle cx="16" cy="9" r="1.6" fill="#0f7a33" />
      <ellipse cx="22" cy="18" rx="9.5" ry="8.5" fill="#eee" />
      <path d="M25 24L29 29L28 23Z" fill="#eee" />
      <circle cx="19" cy="17" r="1.3" fill="#777" />
      <circle cx="25" cy="17" r="1.3" fill="#777" />
    </svg>
    <svg className="absolute left-[632px] top-[10px]" width="32" height="32" viewBox="0 0 32 32">
      <circle cx="15" cy="15" r="14" fill="#dd5044" />
      <path d="M15 15L27 8A14 14 0 0 1 22 27Z" fill="#f0c030" />
      <path d="M15 15L3 8A14 14 0 0 0 15 29Z" fill="#3c9a55" />
      <circle cx="15" cy="15" r="6" fill="#4c8bf0" stroke="#eee" strokeWidth="2" />
      <ellipse cx="21" cy="23" rx="10" ry="8.5" fill="#98a3ae" />
      <ellipse cx="21" cy="20" rx="6" ry="4" fill="#c9d0d6" />
    </svg>
    <svg className="absolute left-[694px] top-[11px]" width="28" height="30" viewBox="0 0 28 30">
      <path d="M9 2H27V28H9Z" fill="#fff" stroke="#2b579a" />
      <path d="M15 7H25M15 12H25M15 17H25M15 22H25" stroke="#2b579a" strokeWidth="2" />
      <path d="M0 4L15 1V29L0 26Z" fill="#2b579a" />
    </svg>
    <span className="absolute left-[695px] top-[13px] font-bold text-[14px] leading-[24px]">W</span>
    <div className="absolute left-[755px] top-[9px] w-[30px] h-[30px] rounded-[5px] bg-[#06c300]" />
    <div className="absolute left-[758px] top-[14px] w-[24px] h-[18px] rounded-[50%] bg-white text-center text-[#06c300] font-bold text-[8px] leading-[18px]">LINE</div>
    <svg className="absolute left-[816px] top-[11px]" width="32" height="28" viewBox="0 0 32 28">
      <path d="M2 1H12L15 5H30V27H2Z" fill="#f6cf62" />
      <path d="M2 1H12L15 5H2Z" fill="#d9a93a" />
      <path d="M6 27V17H26V27H21V22H11V27Z" fill="#3f86c8" />
    </svg>
    <svg className="absolute left-[880px] top-[11px]" width="28" height="30" viewBox="0 0 28 30">
      <path d="M10 3H27V27H10Z" fill="#fff" stroke="#1d6f42" />
      <path d="M14 3V27M20 3V27M10 9H27M10 15H27M10 21H27" stroke="#1d6f42" />
      <path d="M0 3L15 0V30L0 27Z" fill="#1d6f42" />
    </svg>
    <span className="absolute left-[884px] top-[13px] font-bold text-[14px] leading-[24px]">X</span>
    <div className="absolute left-[559px] top-[46px] w-[51px] h-[4px] bg-[#a8e3e3]" />
    <div className="absolute left-[621px] top-[46px] w-[51px] h-[4px] bg-[#a8e3e3]" />
    <div className="absolute left-[683px] top-[46px] w-[51px] h-[4px] bg-[#a8e3e3]" />
    <div className="absolute left-[745px] top-[46px] w-[51px] h-[4px] bg-[#a8e3e3]" />
    <div className="absolute left-[807px] top-[46px] w-[51px] h-[4px] bg-[#a8e3e3]" />
    <div className="absolute left-[869px] top-[46px] w-[51px] h-[4px] bg-[#a8e3e3]" />
    {/* tray */}
    <svg className="absolute left-[1425px] top-[15px]" width="30" height="21" viewBox="0 0 30 21" fill="none" stroke="#eee" strokeWidth="1.6">
      <path d="M1 1H26V20H1ZM26 5H29V18C29 19 28 20 26 20" />
      <path d="M5 6H22M5 10H12V16H5ZM15 10H22M15 13H22M15 16H22" />
    </svg>
    <span className="absolute left-[1466px] top-[12px] text-[18px] leading-[26px] tracking-[-0.5px]">20°C</span>
    <span className="absolute left-[1516px] top-[12px] text-[18px] leading-[26px]">多雲</span>
    <ChevronUp className="absolute left-[1570px] top-[15px]" size={20} strokeWidth={1.2} />
    <svg className="absolute left-[1602px] top-[13px]" width="16" height="25" viewBox="0 0 16 25" fill="none" stroke="#fff">
      <rect x="4" y="0" width="8" height="16" rx="4" fill="#fff" />
      <path d="M1 10C1 15 4 18 8 18S15 15 15 10M8 18V24M4 24H12" />
    </svg>
    <svg className="absolute left-[1630px] top-[12px]" width="22" height="27" viewBox="0 0 22 27" fill="none">
      <path d="M1 5L18 1V20H1Z" stroke="#ddd" />
      <path d="M7 9H13V15H7Z" stroke="#ccc" />
      <circle cx="15" cy="22" r="4.5" fill="#f08a0c" />
    </svg>
    <svg className="absolute left-[1661px] top-[15px]" width="20" height="21" viewBox="0 0 20 21" fill="none" stroke="#ccc">
      <path d="M1 7H5L10 2V19L5 14H1ZM13 7C15 9 15 12 13 14M16 4C19 8 19 13 16 17" />
    </svg>
    <svg className="absolute left-[1691px] top-[14px]" width="20" height="23" viewBox="0 0 20 23" fill="none" stroke="#ddd">
      <path d="M5 1H19V16H5ZM1 1H3V6H1ZM12 16V21M7 21H17" />
    </svg>
    <span className="absolute left-[1723px] top-[13px] text-[15px] leading-[24px]">繁體</span>
    <div className="absolute left-[1766px] top-[3px] w-[80px] text-center text-[16px] leading-[23px]">
      上午 11:27<br />2021/11/27
    </div>
    <svg className="absolute left-[1868px] top-[15px]" width="21" height="22" viewBox="0 0 21 22">
      <path d="M0 0H20V18H14L10 22V18H0Z" fill="#fff" />
      <path d="M4 5H16M4 9H16M4 13H11" stroke="#13201f" strokeWidth="1.4" />
    </svg>
  </div>
);

export default function App() {
  return (
    <div className="relative flex flex-col w-[1920px] h-[1080px] overflow-hidden bg-[#f3f3f3] [font-family:Open_Sans,Noto_Sans_CJK_TC,sans-serif]">
      <TitleBar />
      <Ribbon />
      <FormulaBar />
      <Sheet />
      <SheetTabs />
      <StatusBar />
      <Taskbar />
    </div>
  );
}
